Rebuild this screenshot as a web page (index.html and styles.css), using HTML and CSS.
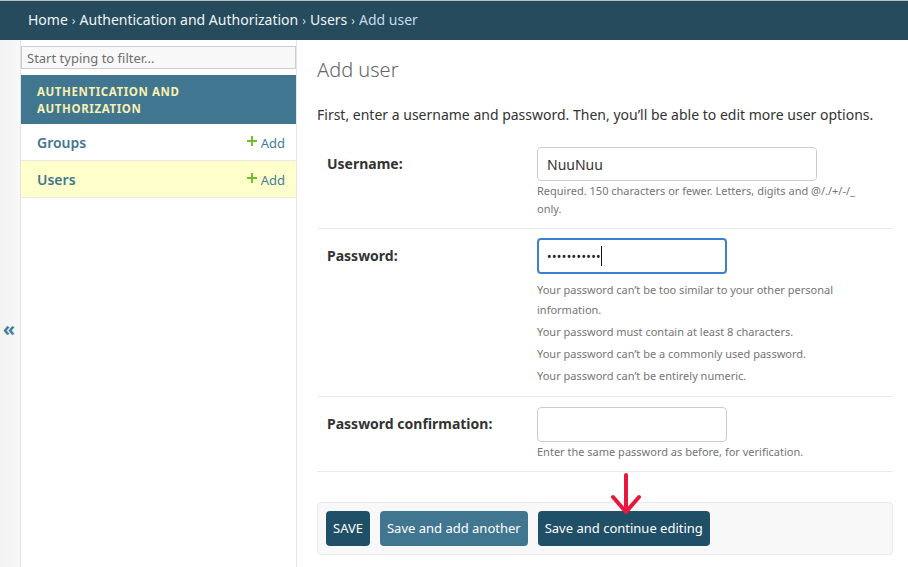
FILE: index.html
```html
<!DOCTYPE html>
<html lang="en">
<head>
<meta charset="utf-8">
<title>Add user</title>
<link rel="stylesheet" href="styles.css">
</head>
<body>
<div class="breadcrumbs">
  <a href="#">Home</a><span class="sep">›</span><a href="#">Authentication and Authorization</a><span class="sep">›</span><a href="#">Users</a><span class="sep">›</span><span class="current">Add user</span>
</div>
<div class="main">
  <div class="toggle"><span class="toggle-icon">«</span></div>
  <nav class="sidebar">
    <input class="nav-filter" type="search" placeholder="Start typing to filter...">
    <div class="app-caption">Authentication and Authorization</div>
    <div class="model-row">
      <a class="model-name" href="#">Groups</a>
      <a class="add-link" href="#"><svg class="plus" viewBox="0 0 10 10" width="10" height="10"><path d="M4 0h2v4h4v2H6v4H4V6H0V4h4z" fill="#70bf2b"/></svg>Add</a>
    </div>
    <div class="model-row current-model">
      <a class="model-name" href="#">Users</a>
      <a class="add-link" href="#"><svg class="plus" viewBox="0 0 10 10" width="10" height="10"><path d="M4 0h2v4h4v2H6v4H4V6H0V4h4z" fill="#70bf2b"/></svg>Add</a>
    </div>
  </nav>
  <div class="content">
    <h1 class="title">Add user</h1>
    <p class="intro">First, enter a username and password. Then, you’ll be able to edit more user options.</p>
    <div class="fieldset">
      <div class="form-row">
        <label class="field-label">Username:</label>
        <div class="field">
          <input class="text-input wide" type="text" value="NuuNuu">
          <div class="help">Required. 150 characters or fewer. Letters, digits and @/./+/-/_ only.</div>
        </div>
      </div>
      <div class="form-row">
        <label class="field-label">Password:</label>
        <div class="field">
          <div class="text-input focused"><span class="dots">•••••••••••</span><span class="caret"></span></div>
          <ul class="help help-list">
            <li>Your password can’t be too similar to your other personal information.</li>
            <li>Your password must contain at least 8 characters.</li>
            <li>Your password can’t be a commonly used password.</li>
            <li>Your password can’t be entirely numeric.</li>
          </ul>
        </div>
      </div>
      <div class="form-row">
        <label class="field-label">Password confirmation:</label>
        <div class="field">
          <input class="text-input" type="password">
          <div class="help">Enter the same password as before, for verification.</div>
        </div>
      </div>
    </div>
    <div class="submit-row">
      <button class="btn btn-default">SAVE</button>
      <button class="btn btn-light">Save and add another</button>
      <button class="btn btn-default">Save and continue editing</button>
    </div>
  </div>
</div>
<svg class="annotation" width="40" height="46" viewBox="0 0 40 46">
  <path d="M18 3 V40 M5 25 L18 40 L31 25" fill="none" stroke="#e8173e" stroke-width="4" stroke-linecap="round" stroke-linejoin="round"/>
</svg>
</body>
</html>
```
FILE: styles.css
```css
* { box-sizing: border-box; }
html, body { margin: 0; padding: 0; }
body {
  font-family: "Noto Sans", "Open Sans", sans-serif;
  color: #333;
  background: #fff;
  font-size: 14px;
}
a { text-decoration: none; }

.breadcrumbs {
  background: #264b5d;
  border-top: 1px solid #b9c4ca;
  height: 40px;
  padding: 0 28px;
  line-height: 38px;
  font-size: 14px;
  color: #c4dce8;
  white-space: nowrap;
}
.breadcrumbs a { color: #f0f4f6; }
.breadcrumbs .sep { color: #c4dce8; margin: 0 4px; font-size: 12px; }
.breadcrumbs .current { color: #c4dce8; }

.main {
  display: flex;
  min-height: calc(100vh - 40px);
}
.toggle {
  width: 21px;
  flex: none;
  background: linear-gradient(to right, #f3f3f3, #f8f8f8);
  border-right: 1px solid #e2e2e2;
  display: flex;
  align-items: flex-start;
  justify-content: center;
  padding-top: 279px;
}
.toggle-icon {
  color: #447e9b;
  font-size: 20px;
  font-weight: 700;
  line-height: 20px;
  margin-left: -2px;
}
.sidebar {
  width: 276px;
  flex: none;
  border-right: 1px solid #e6e6e6;
  padding-top: 6px;
}
.nav-filter {
  display: block;
  width: 275px;
  height: 23px;
  margin: 0 0 6px 0;
  border: 1px solid #ccc;
  background: #f8f8f8;
  padding: 1px 5px;
  font-family: "Noto Sans", sans-serif;
  font-size: 13px;
  color: #333;
  border-radius: 0;
  outline: none;
}
.nav-filter::placeholder { color: #6f6f6f; }
.app-caption {
  background: #417690;
  color: #f8f0b0;
  text-transform: uppercase;
  font-size: 11.5px;
  font-weight: 700;
  letter-spacing: 0.6px;
  line-height: 17px;
  padding: 8px 16px 7px;
  width: 275px;
}
.model-row {
  width: 275px;
  height: 37px;
  border-bottom: 1px solid #e8e8e8;
  display: flex;
  align-items: center;
  justify-content: space-between;
  padding: 0 11px 0 16px;
}
.current-model { background: #ffffcc; }
.model-name {
  color: #417690;
  font-weight: 600;
  font-size: 14px;
}
.add-link {
  color: #447e9b;
  font-size: 13px;
  display: flex;
  align-items: center;
  margin-top: 1px;
}
.plus { margin-right: 4px; margin-top: -3px; }

.content {
  flex: 1;
  padding: 0 15px 0 20px;
  position: relative;
}
.title {
  margin: 18px 0 0;
  font-size: 20px;
  line-height: 24px;
  font-weight: 300;
  color: #666;
}
.intro {
  margin: 23px 0 0;
  font-size: 14px;
  line-height: 20px;
  color: #333;
}
.fieldset { margin-top: 12px; }
.form-row {
  display: grid;
  grid-template-columns: 210px 1fr;
  padding: 10px;
  border-bottom: 1px solid #eaeaea;
}
.field-label {
  font-weight: 700;
  font-size: 14px;
  line-height: 34px;
  color: #333;
}
.text-input {
  display: block;
  width: 190px;
  height: 35px;
  border: 1px solid #ccc;
  border-radius: 4px;
  padding: 0 9px;
  font-family: "Noto Sans", sans-serif;
  font-size: 14px;
  color: #333;
  background: #fff;
  outline: none;
}
.text-input.wide { width: 280px; height: 34px; }
.focused {
  border: 2px solid #3b7fd3;
  display: flex;
  align-items: center;
  padding: 0 8px;
  height: 36px;
  margin-top: -1px;
}
.dots { font-size: 12px; letter-spacing: 0.4px; color: #222; }
.caret { display: inline-block; width: 1px; height: 20px; background: #111; margin-left: 0; }
.help {
  font-size: 11px;
  line-height: 18px;
  color: #757575;
  margin-top: 1px;
  max-width: 335px;
}
.help-list {
  list-style: none;
  padding: 0;
  margin: 6px 0 0;
}
.help-list li { line-height: 20px; margin-bottom: 2px; }
.help-list li:last-child { margin-bottom: 0; }

.submit-row {
  margin-top: 30px;
  background: #f8f8f8;
  border: 1px solid #eaeaea;
  border-radius: 4px;
  padding: 8px;
  display: flex;
  gap: 10px;
}
.btn {
  height: 35px;
  border: none;
  border-radius: 4px;
  padding: 0 7px;
  font-family: "Noto Sans", sans-serif;
  font-size: 13px;
  line-height: 33px;
  color: #fff;
  cursor: pointer;
}
.btn-default { background: #205067; }
.btn-light { background: #417690; }

.annotation {
  position: absolute;
  left: 608px;
  top: 472px;
}
```
